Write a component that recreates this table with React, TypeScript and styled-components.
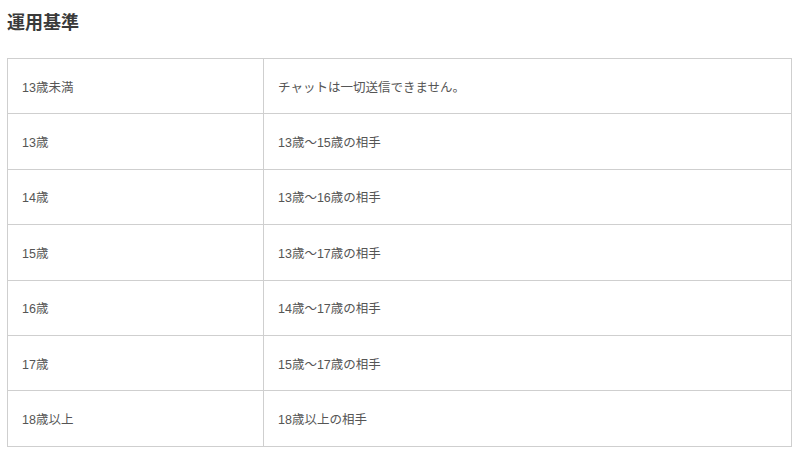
import React from 'react'
import styled, { createGlobalStyle } from 'styled-components';

const rows: [string, string][] = [
  ['13歳未満', 'チャットは一切送信できません。'],
  ['13歳', '13歳〜15歳の相手'],
  ['14歳', '13歳〜16歳の相手'],
  ['15歳', '13歳〜17歳の相手'],
  ['16歳', '14歳〜17歳の相手'],
  ['17歳', '15歳〜17歳の相手'],
  ['18歳以上', '18歳以上の相手'],
];

function App() {
  return (
    <Page>
      <GlobalStyle />
      <Title>運用基準</Title>
      <Table>
        <tbody>
          {rows.map(([age, target]) => (
            <tr key={age}>
              <AgeCell>{age}</AgeCell>
              <Cell>{target}</Cell>
            </tr>
          ))}
        </tbody>
      </Table>
    </Page>
  )
}

export default App

const GlobalStyle = createGlobalStyle`
  body {
    margin: 0;
    background: #fff;
    font-family: "Liberation Sans", "Noto Sans CJK JP", sans-serif;
  }
`;

const Page = styled.div`
  padding: 9px 9px 0 7px;
`;

const Title = styled.h2`
  margin: 0 0 25px;
  font-family: "Noto Sans CJK JP", sans-serif;
  font-size: 18px;
  line-height: 24px;
  font-weight: 700;
  color: #3a3a3a;
`;

const Table = styled.table`
  width: 785px;
  border-collapse: collapse;
  border: 1px solid #cfcfcf;
`;

const Cell = styled.td`
  height: 55.4px;
  padding: 0 14px;
  border: 1px solid #cfcfcf;
  font-size: 12.5px;
  color: #555;
  vertical-align: middle;
  box-sizing: border-box;
`;

const AgeCell = styled(Cell)`
  width: 256px;
`;
